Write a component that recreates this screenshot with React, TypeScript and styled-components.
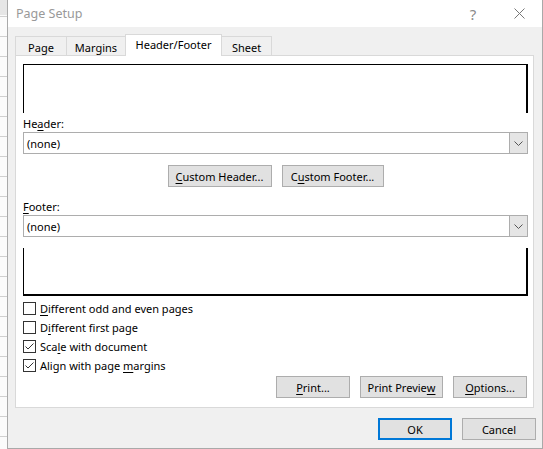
import React from 'react';
import styled, { createGlobalStyle } from 'styled-components';

const GlobalStyle = createGlobalStyle`
	html, body {
		margin: 0;
		padding: 0;
		overflow: hidden;
	}
	body {
		font-family: "Noto Sans", "Segoe UI", sans-serif;
		font-size: 11px;
		color: #000;
		background: #fff;
	}
`;

const Screen = styled.div`
	display: flex;
	width: 543px;
	height: 449px;
`;

const SheetEdge = styled.div`
	width: 7px;
	flex: 0 0 7px;
	background:
		linear-gradient(#e6e6e6, #e6e6e6) 0 0 / 100% 15px no-repeat,
		repeating-linear-gradient(to bottom, #d0d0d0 0 1px, #fbfbfb 1px 20px) 0 16px / 100% 100%;
`;

const Dialog = styled.div`
	flex: 0 0 536px;
	box-sizing: border-box;
	display: flex;
	flex-direction: column;
	background: #f0f0f0;
	border: 1px solid #a9a9a9;
	border-top: none;
`;

const TitleBar = styled.div`
	height: 27px;
	flex: 0 0 27px;
	display: flex;
	align-items: center;
	background: #fff;
	padding-left: 8px;
`;

const Title = styled.span`
	flex: 1;
	font-size: 12.5px;
	color: #999;
	margin-top: -1px;
`;

const TitleButton = styled.div<{ $w: number }>`
	width: ${(p) => p.$w}px;
	height: 27px;
	display: flex;
	align-items: center;
	justify-content: center;
	color: #8a8a8a;
	font-size: 15px;
`;

const Body = styled.div`
	flex: 1;
	padding: 8px 8px 0 7px;
	display: flex;
	flex-direction: column;
`;

const TabRow = styled.div`
	display: flex;
	align-items: flex-end;
	height: 21px;
	margin-bottom: -1px;
	position: relative;
	z-index: 1;
`;

const Tab = styled.div<{ $w: number; $active?: boolean }>`
	box-sizing: border-box;
	width: ${(p) => p.$w}px;
	height: ${(p) => (p.$active ? 22 : 20)}px;
	margin-left: -1px;
	&:first-child {
		margin-left: 0;
	}
	border: 1px solid #d9d9d9;
	border-bottom: ${(p) => (p.$active ? 'none' : '1px solid #d9d9d9')};
	background: ${(p) => (p.$active ? '#fff' : '#f0f0f0')};
	display: flex;
	justify-content: center;
	padding-top: ${(p) => (p.$active ? 2 : 3)}px;
	line-height: 15px;
`;

const Panel = styled.div`
	box-sizing: border-box;
	height: 353px;
	background: #fff;
	border: 1px solid #d9d9d9;
	padding: 8px 5px 0 7px;
	display: flex;
	flex-direction: column;
`;

const HeaderPreview = styled.div`
	height: 48px;
	border-top: 1px solid #000;
	border-left: 1px solid #000;
	border-right: 2px solid #000;
`;

const FooterPreview = styled.div`
	height: 46px;
	margin-top: 11px;
	border-left: 1px solid #000;
	border-right: 2px solid #000;
	border-bottom: 2px solid #000;
`;

const Label = styled.div<{ $top: number }>`
	height: 16px;
	line-height: 16px;
	margin-top: ${(p) => p.$top}px;
`;

const Key = styled.span`
	text-decoration: underline;
	text-underline-offset: 2px;
`;

const Select = styled.div`
	box-sizing: border-box;
	height: 22px;
	border: 1px solid #adadad;
	display: flex;
	align-items: center;
	background: #fff;
`;

const SelectText = styled.span`
	flex: 1;
	padding-left: 3px;
`;

const DropButton = styled.div`
	box-sizing: border-box;
	width: 18px;
	height: 20px;
	background: #e5e5e5;
	border-left: 1px solid #adadad;
	display: flex;
	align-items: center;
	justify-content: center;
`;

const ButtonRow = styled.div<{ $top: number; $justify: string }>`
	display: flex;
	gap: 10px;
	justify-content: ${(p) => p.$justify};
	margin-top: ${(p) => p.$top}px;
`;

const Button = styled.div<{ $w: number; $default?: boolean }>`
	box-sizing: border-box;
	width: ${(p) => p.$w}px;
	height: 22px;
	background: #e1e1e1;
	border: ${(p) => (p.$default ? '2px solid #0078d7' : '1px solid #adadad')};
	display: flex;
	align-items: center;
	justify-content: center;
	white-space: nowrap;
`;

const CheckList = styled.div`
	margin-top: 3px;
	display: flex;
	flex-direction: column;
`;

const CheckRow = styled.div`
	height: 19px;
	display: flex;
	align-items: center;
	gap: 4px;
`;

const Box = styled.div`
	box-sizing: border-box;
	width: 13px;
	height: 13px;
	border: 1px solid #333;
	background: #fff;
	display: flex;
`;

const Footer = styled.div`
	display: flex;
	justify-content: flex-end;
	gap: 10px;
	margin-top: 10px;
	margin-right: -2px;
`;

function Check({ on, children }: { on?: boolean; children: React.ReactNode }) {
	return (
		<CheckRow>
			<Box>
				{on && (
					<svg width="11" height="11" viewBox="0 0 11 11">
						<path d="M1.5 5.5 L4 8 L9.5 2.5" fill="none" stroke="#333" strokeWidth="1" />
					</svg>
				)}
			</Box>
			<span>{children}</span>
		</CheckRow>
	);
}

function Combo() {
	return (
		<Select>
			<SelectText>(none)</SelectText>
			<DropButton>
				<svg width="9" height="5" viewBox="0 0 9 5">
					<path d="M0.5 0.5 L4.5 4.5 L8.5 0.5" fill="none" stroke="#555" strokeWidth="1" />
				</svg>
			</DropButton>
		</Select>
	);
}

export default function App(): JSX.Element {
	return (
		<Screen>
			<GlobalStyle />
			<SheetEdge />
			<Dialog>
				<TitleBar>
					<Title>Page Setup</Title>
					<TitleButton $w={46}>?</TitleButton>
					<TitleButton $w={46}>
						<svg width="11" height="11" viewBox="0 0 11 11">
							<path d="M0.5 0.5 L10.5 10.5 M10.5 0.5 L0.5 10.5" stroke="#777" strokeWidth="1" />
						</svg>
					</TitleButton>
				</TitleBar>
				<Body>
					<TabRow>
						<Tab $w={52}>Page</Tab>
						<Tab $w={60}>Margins</Tab>
						<Tab $w={97} $active>Header/Footer</Tab>
						<Tab $w={51}>Sheet</Tab>
					</TabRow>
					<Panel>
						<HeaderPreview />
						<Label $top={3}>
							He<Key>a</Key>der:
						</Label>
						<Combo />
						<ButtonRow $top={11} $justify="center">
							<Button $w={104}>
								<Key>C</Key>ustom Header...
							</Button>
							<Button $w={102}>
								C<Key>u</Key>stom Footer...
							</Button>
						</ButtonRow>
						<Label $top={12}>
							<Key>F</Key>ooter:
						</Label>
						<Combo />
						<FooterPreview />
						<CheckList>
							<Check>
								<Key>D</Key>ifferent odd and even pages
							</Check>
							<Check>
								D<Key>i</Key>fferent first page
							</Check>
							<Check on>
								Sca<Key>l</Key>e with document
							</Check>
							<Check on>
								Align with page <Key>m</Key>argins
							</Check>
						</CheckList>
						<ButtonRow $top={1} $justify="flex-end">
							<Button $w={74}>
								<Key>P</Key>rint...
							</Button>
							<Button $w={83}>
								Print Previe<Key>w</Key>
							</Button>
							<Button $w={74} style={{ marginRight: 1 }}>
								<Key>O</Key>ptions...
							</Button>
						</ButtonRow>
					</Panel>
					<Footer>
						<Button $w={74} $default>
							OK
						</Button>
						<Button $w={74}>Cancel</Button>
					</Footer>
				</Body>
			</Dialog>
		</Screen>
	);
}
